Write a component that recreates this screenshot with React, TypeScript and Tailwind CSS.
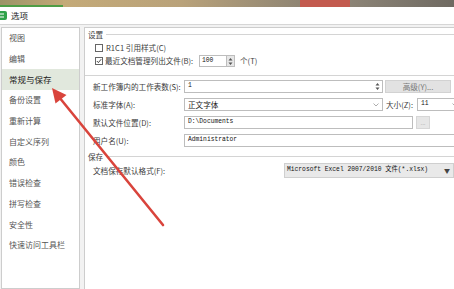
import React from "react";

const menu = [
  "视图",
  "编辑",
  "常规与保存",
  "备份设置",
  "重新计算",
  "自定义序列",
  "颜色",
  "错误检查",
  "拼写检查",
  "安全性",
  "快速访问工具栏",
];

const mono = "font-['Liberation_Mono','Noto_Sans_CJK_SC',monospace] text-[6.3px] text-[#111]";

function Spin() {
  return (
    <svg width="5" height="9" viewBox="0 0 5 9" className="shrink-0">
      <path d="M2.5 1 L4.5 3.5 H0.5Z M2.5 8 L4.5 5.5 H0.5Z" fill="#555" />
    </svg>
  );
}

function Chevron() {
  return (
    <svg width="6" height="4" viewBox="0 0 6 4" className="shrink-0">
      <polyline points="0.5,0.5 3,3 5.5,0.5" fill="none" stroke="#999" strokeWidth="0.8" />
    </svg>
  );
}

function Group({ title }: { title: string }) {
  return (
    <div className="flex items-center h-[13px] pl-[3px] gap-[3px]">
      <span>{title}</span>
      <div className="flex-1 border-t border-[#d4d4d4]" />
    </div>
  );
}

export default function App() {
  return (
    <div className="relative w-[454px] h-[289px] overflow-hidden flex flex-col whitespace-nowrap bg-[#f2f2f2] font-['Noto_Sans_CJK_SC',sans-serif] text-[8px] leading-none text-[#3c3c3c]">
      {/* photo strip */}
      <div className="flex h-[7px] shrink-0">
        <div className="w-[63px] bg-gradient-to-r from-[#9c9466] to-[#c2a877] border-b-2 border-[#4f9d45]" />
        <div className="w-[237px] bg-gradient-to-r from-[#c4aa78] via-[#b9a27a] to-[#8f8573]" />
        <div className="w-[50px] bg-[#c35a4e]" />
        <div className="flex-1 bg-gradient-to-r from-[#8c8476] to-[#6f6a62]" />
      </div>

      {/* title bar */}
      <div className="flex items-center h-[18px] shrink-0 bg-white border-b border-[#d6d6d6] gap-[4px]">
        <svg width="7" height="9" viewBox="0 0 7 9" className="shrink-0">
          <rect x="-3" y="0" width="10" height="9" rx="2" fill="#2fa24a" />
          <path d="M0 3 H4 M0 6 H4" stroke="#fff" strokeWidth="1.1" />
        </svg>
        <span className="text-[8.5px] text-[#222]">选项</span>
      </div>

      {/* body */}
      <div className="flex flex-1 min-h-0">
        <div className="w-[79px] ml-[1px] mt-[2px] shrink-0 bg-white border border-[#cdcdcd] flex flex-col">
          {menu.map((m) => (
            <div
              key={m}
              className={
                "h-[20.7px] shrink-0 flex items-center pl-[7px] " +
                (m === "常规与保存" ? "bg-[#e1e8dd] text-[#222] text-[8.5px]" : "text-[#555]")
              }
            >
              {m}
            </div>
          ))}
        </div>

        <div className="flex-1 ml-[4px] mt-[2px] bg-white border-l border-t border-[#cdcdcd] overflow-hidden flex flex-col text-[7.6px]">
          <Group title="设置" />

          <div className="flex items-center h-[13px] pl-[10px]">
            <div className="w-[8px] h-[8px] border border-[#666] bg-white shrink-0" />
            <span className="ml-[3px]">R1C1 引用样式(C)</span>
          </div>

          <div className="flex items-center h-[14px] pl-[10px]">
            <div className="w-[8px] h-[8px] border border-[#666] bg-white shrink-0 flex items-center justify-center">
              <svg width="6" height="6" viewBox="0 0 6 6">
                <polyline points="0.8,3 2.4,4.6 5.2,1.2" fill="none" stroke="#333" strokeWidth="0.9" />
              </svg>
            </div>
            <span className="ml-[2px] w-[94px] shrink-0">最近文档管理列出文件(B):</span>
            <div className="w-[28px] h-[12px] shrink-0 border border-[#bdbdbd] flex items-center pl-[2px]">
              <span className={mono}>100</span>
            </div>
            <div className="w-[8px] h-[12px] shrink-0 bg-[#e6e6e6] border border-l-0 border-[#bdbdbd] flex items-center justify-center">
              <Spin />
            </div>
            <span className="ml-[5px]">个(T)</span>
          </div>

          <div className="mt-[7px] border-t border-[#d4d4d4]" />

          <div className="flex flex-col gap-[5px] pt-[4px] pl-[8px]">
            <div className="flex items-center h-[13px]">
              <span className="w-[91px] shrink-0">新工作簿内的工作表数(S):</span>
              <div className="w-[199px] h-[13px] shrink-0 border border-[#bdbdbd] flex items-center pl-[3px] pr-[2px]">
                <span className={"flex-1 " + mono}>1</span>
                <Spin />
              </div>
              <div className="ml-[2px] w-[66px] h-[13px] shrink-0 bg-[#e2e2e2] border border-[#d2d2d2] flex items-center justify-center text-[#777]">
                高级(Y)...
              </div>
            </div>

            <div className="flex items-center h-[13px]">
              <span className="w-[91px] shrink-0">标准字体(A):</span>
              <div className="w-[199px] h-[13px] shrink-0 border border-[#bdbdbd] flex items-center pl-[3px] pr-[3px]">
                <span className="flex-1 text-[#222]">正文字体</span>
                <Chevron />
              </div>
              <span className="ml-[3px] w-[31px] shrink-0">大小(Z):</span>
              <div className="w-[46px] h-[13px] shrink-0 border border-[#bdbdbd] flex items-center pl-[3px] pr-[4px]">
                <span className={"flex-1 " + mono}>11</span>
                <Chevron />
              </div>
            </div>

            <div className="flex items-center h-[13px]">
              <span className="w-[91px] shrink-0">默认文件位置(D):</span>
              <div className="w-[229px] h-[13px] shrink-0 border border-[#bdbdbd] flex items-center pl-[3px]">
                <span className={mono}>D:\Documents</span>
              </div>
              <div className="ml-[3px] w-[14px] h-[13px] shrink-0 bg-[#e6e6e6] border border-[#d6d6d6] flex items-center justify-center text-[#aaa] text-[6px]">
                ...
              </div>
            </div>

            <div className="flex items-center h-[13px]">
              <span className="w-[91px] shrink-0">用户名(U):</span>
              <div className="w-[280px] h-[13px] shrink-0 border border-[#bdbdbd] flex items-center pl-[3px]">
                <span className={mono}>Administrator</span>
              </div>
            </div>
          </div>

          <div className="mt-[3px]">
            <Group title="保存" />
          </div>

          <div className="flex items-center h-[15px] pl-[8px]">
            <span className="w-[191px] shrink-0">文档保存默认格式(F):</span>
            <div className="w-[170px] h-[15px] shrink-0 bg-[#e9e9e9] border border-[#cfcfcf] flex items-center pl-[2px] pr-[3px]">
              <span className={"flex-1 " + mono}>Microsoft Excel 2007/2010 文件(*.xlsx)</span>
              <span className="text-[6px] text-[#444]">▼</span>
            </div>
          </div>
        </div>
      </div>

      {/* red annotation arrow */}
      <svg className="absolute inset-0 pointer-events-none" width="454" height="289" viewBox="0 0 454 289">
        <line x1="163" y1="225" x2="59" y2="97" stroke="#d9443c" strokeWidth="2.6" strokeLinecap="round" />
        <polygon points="52,88 66.5,95 55.5,103.5" fill="#d9443c" />
      </svg>
    </div>
  );
}
